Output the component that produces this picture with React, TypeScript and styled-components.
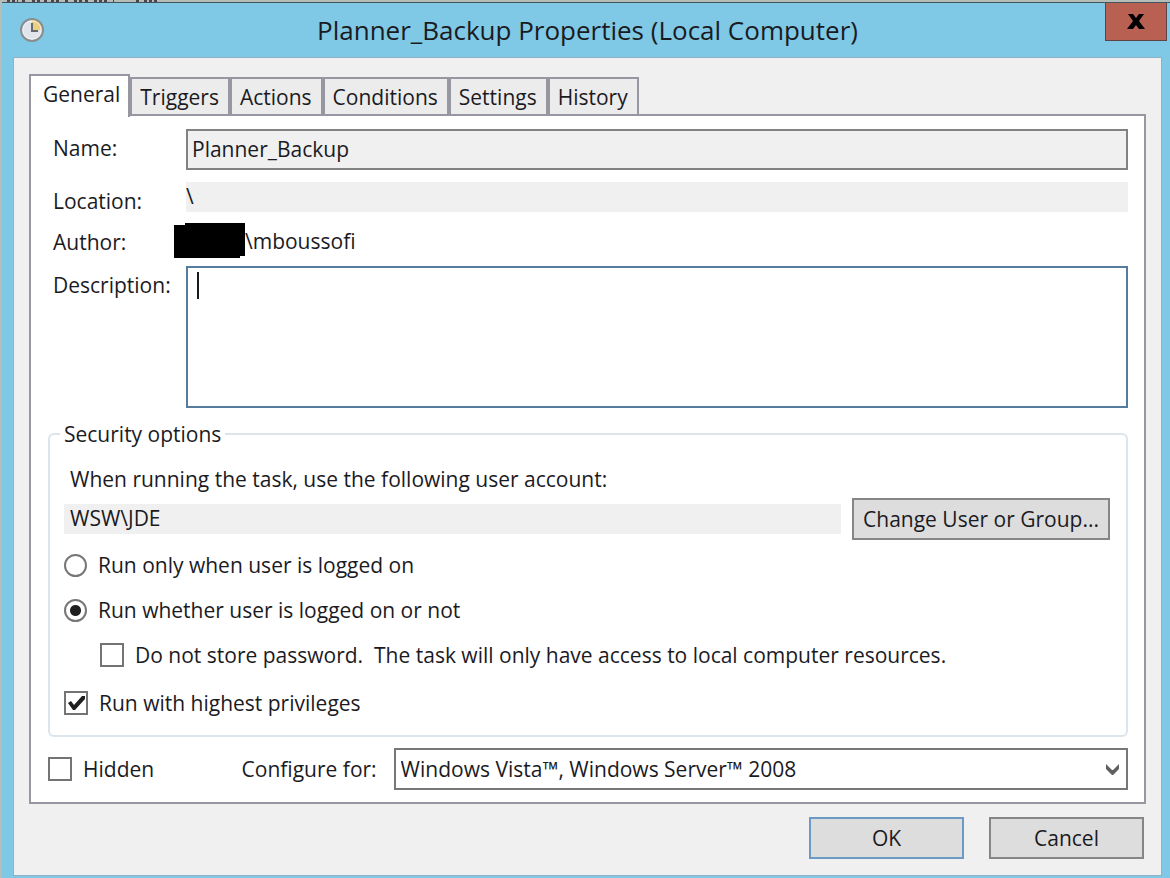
import React, { useState } from "react";
import styled, { createGlobalStyle, css } from "styled-components";

const GlobalStyle = createGlobalStyle`
  *, *::before, *::after { box-sizing: border-box; }
  body {
    margin: 0;
    background: #b5bdb9;
    font-family: "Open Sans", "Noto Sans", sans-serif;
    font-size: 21px;
    line-height: 28px;
    color: #1b1b1f;
  }
  button, input, textarea, select { font: inherit; color: inherit; margin: 0; }
`;

const Backdrop = styled.div`
  padding-left: 2px;
`;

const DesktopStrip = styled.svg`
  display: block;
  width: 160px;
  height: 2px;
`;

const Dialog = styled.main`
  background: #7fc9e6;
  border-top: 1px solid #42555c;
  padding: 0 8px 3px 11px;
`;

const TitleBar = styled.header`
  display: flex;
  align-items: flex-start;
  height: 54px;
  margin: 0 -5px 0 -4px;
`;

const ClockIcon = styled.svg`
  width: 26px;
  height: 26px;
  margin: 14px 0 0 10px;
`;

const Title = styled.h1`
  flex: 1;
  margin: 8px 0 0 25px;
  font-size: 26px;
  line-height: 38px;
  font-weight: 400;
  text-align: center;
`;

const CloseButton = styled.button`
  display: grid;
  place-items: center;
  width: 62px;
  height: 38px;
  padding: 0;
  border: 1px solid #5b4347;
  border-top: 0;
  background: #b86153;
`;

const Client = styled.div`
  background: #f0f0f0;
  border: 1px solid #8fb2c6;
  padding: 16px 15px;
`;

const TabList = styled.div`
  display: flex;
  align-items: flex-end;
`;

const Tab = styled.button<{ $active: boolean }>`
  height: 37px;
  padding: 0 9px 0 8px;
  border: 2px solid #9697a0;
  border-bottom: 0;
  background: #ececec;
  line-height: 32px;
  ${(p) =>
    p.$active &&
    css`
      position: relative;
      height: 43px;
      margin-bottom: -3px;
      padding: 0 8px 6px 12px;
      background: #ffffff;
    `}
`;

const Panel = styled.section`
  border: 2px solid #9697a0;
  background: #ffffff;
  padding: 13px 16px 12px 17px;
`;

const Fields = styled.div`
  display: flex;
  flex-direction: column;
  padding-left: 5px;
`;

const FieldRow = styled.div<{ $gap?: number }>`
  display: grid;
  grid-template-columns: 133px 1fr;
  align-items: start;
  margin-bottom: ${(p) => p.$gap ?? 12}px;
`;

const FieldLabel = styled.label`
  padding-top: 5px;
`;

const NameInput = styled.input`
  width: 100%;
  height: 41px;
  padding: 0 4px 2px;
  border: 2px solid #828282;
  background: #f0f0f0;
`;

const FlatInput = styled.input<{ $inset?: number }>`
  flex: 1;
  min-width: 0;
  width: 100%;
  height: 30px;
  padding: 0 ${(p) => p.$inset ?? 0}px 2px;
  border: 0;
  background: #f0f0f0;
`;

const Author = styled.div`
  display: flex;
  align-items: center;
  margin-left: -12px;
`;

const Redaction = styled.svg`
  width: 71px;
  height: 35px;
`;

const DescriptionBox = styled.div`
  position: relative;
`;

const Description = styled.textarea`
  display: block;
  width: 100%;
  height: 142px;
  padding: 4px 10px;
  border: 2px solid #557c9f;
  background: #ffffff;
  resize: none;
  outline: none;
`;

const Caret = styled.span`
  position: absolute;
  left: 11px;
  top: 6px;
  width: 2px;
  height: 27px;
  background: #1b1b1f;
  pointer-events: none;
`;

const Group = styled.fieldset`
  display: flex;
  flex-direction: column;
  margin: 0;
  min-width: 0;
  padding: 17px 16px 18px 14px;
  border: 2px solid #dce5eb;
  border-radius: 6px;
`;

const Legend = styled.legend`
  margin-left: -4px;
  padding: 0 4px;
`;

const Prompt = styled.label`
  padding-left: 6px;
`;

const AccountRow = styled.div`
  display: flex;
  align-items: center;
  gap: 11px;
  margin: 5px 0 11px;
`;

const PushButton = styled.button<{ $width: number; $primary?: boolean }>`
  width: ${(p) => p.$width}px;
  height: 42px;
  padding: 0;
  border: 2px solid ${(p) => (p.$primary ? "#6b9bc5" : "#868686")};
  background: #dddddd;
`;

const Choice = styled.label<{ $gap?: number; $indent?: boolean }>`
  display: flex;
  align-items: center;
  gap: 11px;
  height: 28px;
  margin: 0 0 ${(p) => p.$gap ?? 0}px ${(p) => (p.$indent ? 36 : 0)}px;
  white-space: pre;
`;

const Radio = styled.input.attrs({ type: "radio" })`
  appearance: none;
  width: 23px;
  height: 23px;
  border: 2px solid #777777;
  border-radius: 50%;
  background: #ffffff;
  &:checked {
    background: radial-gradient(circle, #1f1f1f 5px, #ffffff 6px);
  }
`;

const CheckFrame = styled.span`
  display: grid;
  width: 24px;
  height: 24px;
  > * { grid-area: 1 / 1; }
`;

const CheckInput = styled.input.attrs({ type: "checkbox" })`
  appearance: none;
  width: 24px;
  height: 24px;
  border: 2px solid #747474;
  background: #ffffff;
  &:not(:checked) + svg { visibility: hidden; }
`;

const CheckMark = styled.svg`
  width: 24px;
  height: 24px;
  pointer-events: none;
`;

const FooterRow = styled.div`
  display: flex;
  align-items: center;
  margin-top: 11px;
`;

const ConfigureLabel = styled.label`
  width: 152px;
  margin-left: auto;
`;

const SelectBox = styled.div`
  position: relative;
  width: 68%;
`;

const Select = styled.select`
  display: block;
  appearance: none;
  width: 100%;
  height: 42px;
  padding: 0 32px 0 5px;
  border: 2px solid #777777;
  border-radius: 0;
  background: #ffffff;
`;

const Arrow = styled.svg`
  position: absolute;
  right: 8px;
  top: 15px;
  width: 15px;
  height: 13px;
  pointer-events: none;
`;

const Actions = styled.footer`
  display: flex;
  justify-content: flex-end;
  gap: 25px;
  padding: 13px 2px 0;
`;

const tabs = ["General", "Triggers", "Actions", "Conditions", "Settings", "History"];

function CheckBox({ initial = false }: { initial?: boolean }) {
  const [checked, setChecked] = useState(initial);
  return (
    <CheckFrame>
      <CheckInput checked={checked} onChange={() => setChecked(!checked)} />
      <CheckMark viewBox="0 0 24 24" aria-hidden="true">
        <path d="M4 12l3-2 3 4 8-9h3v3L11 19H9z" fill="#1f1f1f" />
      </CheckMark>
    </CheckFrame>
  );
}

export default function App() {
  const [tab, setTab] = useState("General");
  const [mode, setMode] = useState("always");

  return (
    <Backdrop>
      <GlobalStyle />
      <DesktopStrip viewBox="0 0 160 2" aria-hidden="true">
        <path
          d="M5 1h11M20 1h5M30 1h9M42 1h4M49 1h10M63 1h5M72 1h8M83 1h5M92 1h13M111 1h1M134 1h5M142 1h13"
          stroke="#4b4450"
          strokeWidth="2"
          strokeDasharray="3 2"
        />
      </DesktopStrip>
      <Dialog>
        <TitleBar>
          <ClockIcon viewBox="0 0 26 26" aria-hidden="true">
            <circle cx="13" cy="13" r="11" fill="#dfe5ea" stroke="#8a8c8d" strokeWidth="2" />
            <path d="M13 13V3a10 10 0 0 1 10 10z" fill="#edcf82" />
            <circle cx="13" cy="13" r="9" fill="none" stroke="#f6f6f2" strokeWidth="1" opacity="0.7" />
            <path d="M13 6v8h6" fill="none" stroke="#666b70" strokeWidth="2" />
          </ClockIcon>
          <Title>Planner_Backup Properties (Local Computer)</Title>
          <CloseButton aria-label="Close">
            <svg width="18" height="16" viewBox="0 0 18 16" aria-hidden="true">
              <path d="M1 0h5l3 4 3-4h5l-5 7 6 8h-6l-3-4-3 4H0l6-8z" fill="#000000" />
            </svg>
          </CloseButton>
        </TitleBar>
        <Client>
          <TabList role="tablist">
            {tabs.map((name) => (
              <Tab
                key={name}
                role="tab"
                aria-selected={tab === name}
                $active={tab === name}
                onClick={() => setTab(name)}
              >
                {name}
              </Tab>
            ))}
          </TabList>
          <Panel>
            <Fields>
              <FieldRow>
                <FieldLabel htmlFor="name">Name:</FieldLabel>
                <NameInput id="name" readOnly value="Planner_Backup" />
              </FieldRow>
              <FieldRow $gap={8}>
                <FieldLabel htmlFor="location">Location:</FieldLabel>
                <FlatInput id="location" readOnly value={"\\"} />
              </FieldRow>
              <FieldRow $gap={8}>
                <FieldLabel as="span">Author:</FieldLabel>
                <Author>
                  <Redaction viewBox="0 0 71 35" aria-hidden="true">
                    <path d="M0 2h11V0h60v33h-5v2H0z" fill="#000000" />
                  </Redaction>
                  <span>\mboussofi</span>
                </Author>
              </FieldRow>
              <FieldRow>
                <FieldLabel htmlFor="description">Description:</FieldLabel>
                <DescriptionBox>
                  <Description id="description" />
                  <Caret />
                </DescriptionBox>
              </FieldRow>
            </Fields>
            <Group>
              <Legend>Security options</Legend>
              <Prompt htmlFor="account">When running the task, use the following user account:</Prompt>
              <AccountRow>
                <FlatInput id="account" readOnly $inset={6} value={"WSW\\JDE"} />
                <PushButton $width={258}>Change User or Group...</PushButton>
              </AccountRow>
              <Choice $gap={17}>
                <Radio name="mode" checked={mode === "loggedOn"} onChange={() => setMode("loggedOn")} />
                Run only when user is logged on
              </Choice>
              <Choice $gap={17}>
                <Radio name="mode" checked={mode === "always"} onChange={() => setMode("always")} />
                Run whether user is logged on or not
              </Choice>
              <Choice $gap={20} $indent>
                <CheckBox />
                {"Do not store password.  The task will only have access to local computer resources."}
              </Choice>
              <Choice>
                <CheckBox initial />
                Run with highest privileges
              </Choice>
            </Group>
            <FooterRow>
              <Choice>
                <CheckBox />
                Hidden
              </Choice>
              <ConfigureLabel htmlFor="configure">Configure for:</ConfigureLabel>
              <SelectBox>
                <Select id="configure">
                  <option>Windows Vista™, Windows Server™ 2008</option>
                </Select>
                <Arrow viewBox="0 0 15 13" aria-hidden="true">
                  <path d="M1 1l6 6h1l6-6v5l-6 6H7L1 6z" fill="#606060" />
                </Arrow>
              </SelectBox>
            </FooterRow>
          </Panel>
          <Actions>
            <PushButton $width={155} $primary>OK</PushButton>
            <PushButton $width={155}>Cancel</PushButton>
          </Actions>
        </Client>
      </Dialog>
    </Backdrop>
  );
}
